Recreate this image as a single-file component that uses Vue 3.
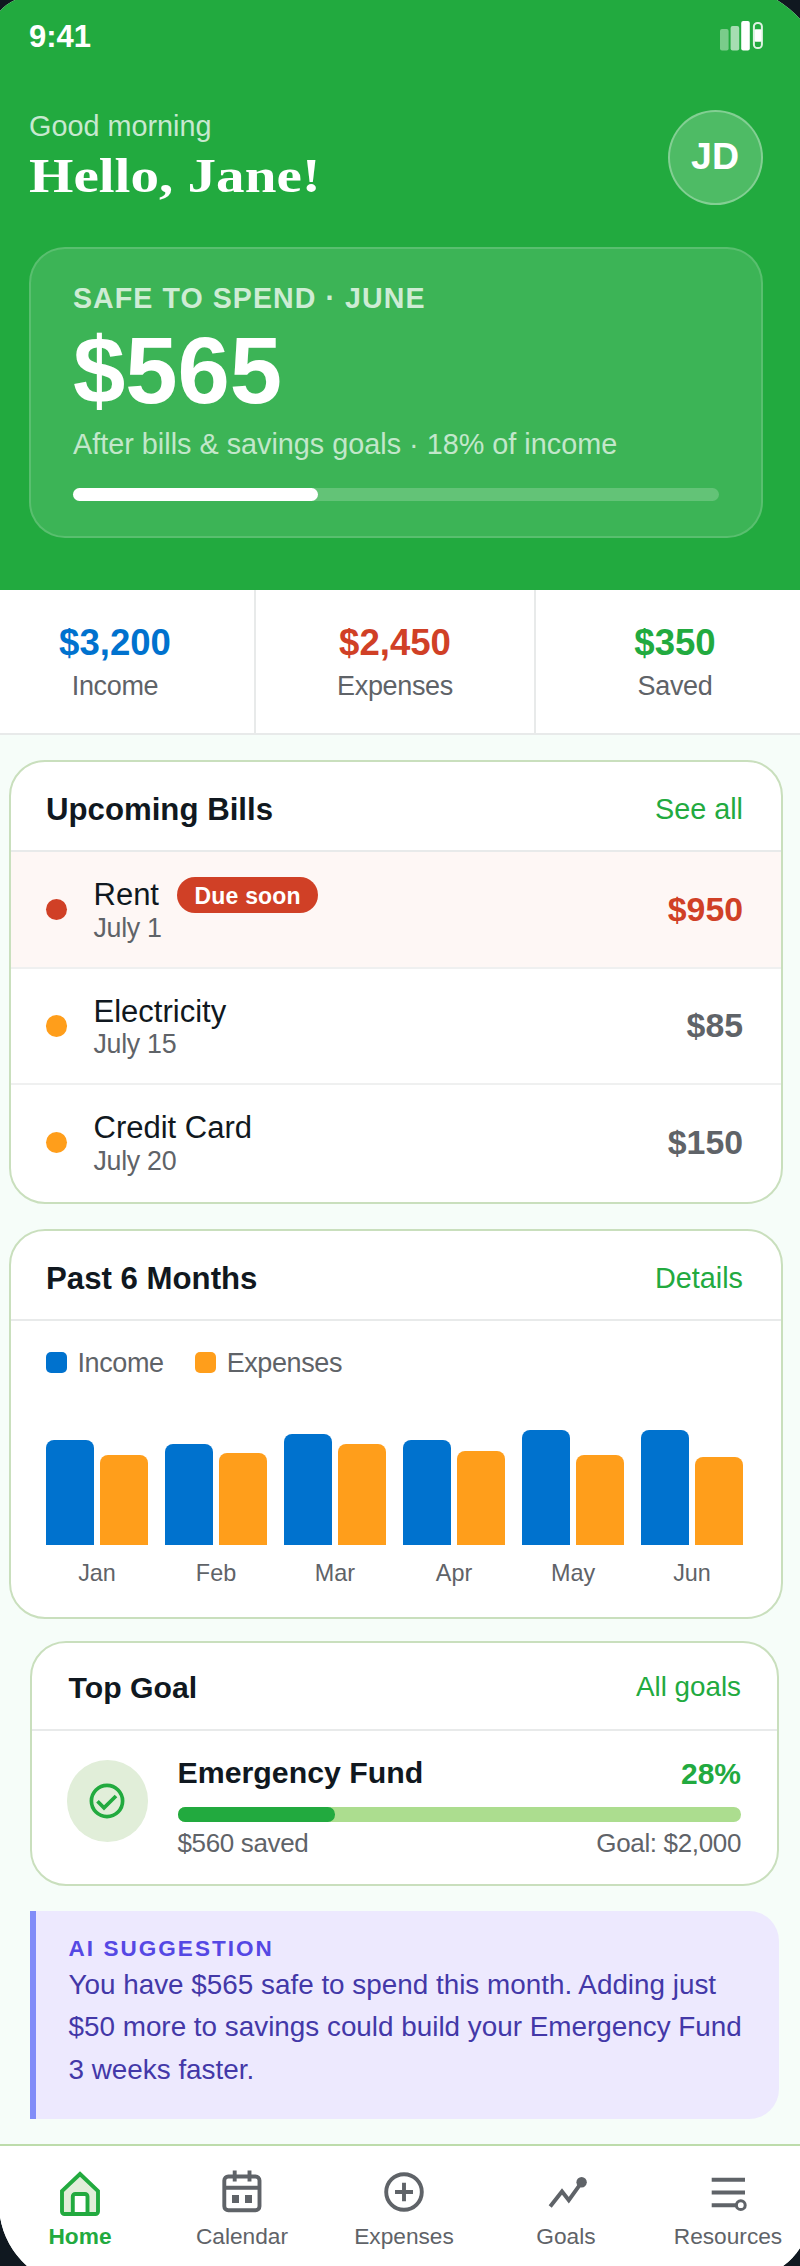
<template>
  <div class="phone">
    <!-- HEADER -->
    <header class="header">
      <div class="status-bar">
        <span class="time">9:41</span>
        <svg class="status-icons" width="43" height="30" viewBox="0 0 43 30">
          <rect x="0" y="8" width="8.6" height="21.5" rx="2" fill="#fff" opacity="0.4" />
          <rect x="10.6" y="5" width="8.6" height="24.5" rx="2" fill="#fff" opacity="0.6" />
          <rect x="21.2" y="0" width="8.6" height="29.5" rx="2" fill="#fff" />
          <rect x="33.9" y="2" width="8" height="25" rx="3.6" fill="none" stroke="#fff" stroke-width="2" opacity="0.85" />
          <rect x="34.6" y="8.2" width="6.8" height="12.6" rx="1" fill="#fff" />
        </svg>
      </div>

      <div class="greeting-row">
        <div class="greeting">
          <p class="greeting-small">Good morning</p>
          <h1 class="greeting-name">Hello, Jane!</h1>
        </div>
        <div class="avatar">JD</div>
      </div>

      <div class="safe-card">
        <p class="safe-label">SAFE TO SPEND · JUNE</p>
        <p class="safe-amount">$565</p>
        <p class="safe-sub">After bills &amp; savings goals · 18% of income</p>
        <div class="safe-track">
          <div class="safe-fill" :style="{ width: safePercent + '%' }"></div>
        </div>
      </div>
    </header>

    <!-- STATS -->
    <section class="stats">
      <div v-for="stat in stats" :key="stat.label" class="stat">
        <span class="stat-value" :class="stat.tone">{{ stat.value }}</span>
        <span class="stat-label">{{ stat.label }}</span>
      </div>
    </section>

    <main class="content">
      <!-- UPCOMING BILLS -->
      <section class="card">
        <div class="card-head">
          <h2>Upcoming Bills</h2>
          <a class="card-link">See all</a>
        </div>
        <div v-for="bill in bills" :key="bill.name" class="bill" :class="{ urgent: bill.urgent }">
          <span class="bill-dot"></span>
          <div class="bill-info">
            <div class="bill-name">
              {{ bill.name }}<span v-if="bill.urgent" class="badge">Due soon</span>
            </div>
            <div class="bill-date">{{ bill.date }}</div>
          </div>
          <span class="bill-amount">{{ bill.amount }}</span>
        </div>
      </section>

      <!-- PAST 6 MONTHS -->
      <section class="card chart-card">
        <div class="card-head">
          <h2>Past 6 Months</h2>
          <a class="card-link">Details</a>
        </div>
        <div class="legend">
          <span class="legend-item"><i class="swatch income"></i>Income</span>
          <span class="legend-item"><i class="swatch expenses"></i>Expenses</span>
        </div>
        <div class="chart">
          <div v-for="m in months" :key="m.name" class="month">
            <div class="bars">
              <div class="bar income" :style="{ height: m.income + 'px' }"></div>
              <div class="bar expenses" :style="{ height: m.expenses + 'px' }"></div>
            </div>
            <span class="month-label">{{ m.name }}</span>
          </div>
        </div>
      </section>

      <!-- TOP GOAL -->
      <section class="card goal-card">
        <div class="card-head">
          <h2>Top Goal</h2>
          <a class="card-link">All goals</a>
        </div>
        <div class="goal">
          <div class="goal-icon">
            <svg width="40" height="40" viewBox="0 0 40 40" fill="none" stroke="#22aa3f" stroke-width="3.7">
              <circle cx="20" cy="20" r="15.6" />
              <path d="M10.5 20.3 L17 26.8 L29 15" />
            </svg>
          </div>
          <div class="goal-body">
            <div class="goal-top">
              <span class="goal-name">Emergency Fund</span>
              <span class="goal-percent">{{ goalPercent }}%</span>
            </div>
            <div class="goal-track">
              <div class="goal-fill" :style="{ width: goalPercent + '%' }"></div>
            </div>
            <div class="goal-bottom">
              <span>$560 saved</span>
              <span>Goal: $2,000</span>
            </div>
          </div>
        </div>
      </section>

      <!-- AI SUGGESTION -->
      <section class="suggestion">
        <p class="suggestion-label">AI SUGGESTION</p>
        <p class="suggestion-text">
          You have $565 safe to spend this month. Adding just<br />
          $50 more to savings could build your Emergency Fund<br />
          3 weeks faster.
        </p>
      </section>
    </main>

    <!-- BOTTOM NAV -->
    <nav class="nav">
      <a class="nav-item active">
        <svg class="nav-icon" viewBox="0 0 48 48">
          <path d="M24 6 L42 23 V43.5 a2.5 2.5 0 0 1 -2.5 2.5 H8.5 a2.5 2.5 0 0 1 -2.5 -2.5 V23 Z" fill="#e1eed9" />
          <path d="M16.8 46 V28.5 a2.5 2.5 0 0 1 2.5 -2.5 H29 a2.5 2.5 0 0 1 2.5 2.5 V46 Z" fill="#fff" />
        </svg>
        <span>Home</span>
      </a>
      <a class="nav-item">
        <svg class="nav-icon" viewBox="0 0 48 48">
          <rect x="6.3" y="8.5" width="35.2" height="33.8" rx="4" />
          <path d="M6.3 19.8 H41.5 M16.7 2.5 V13.5 M31.5 2.5 V13.5" />
          <path d="M14 27 h7 v8 h-7 Z M27 27 h7 v8 h-7 Z" class="solid" />
        </svg>
        <span>Calendar</span>
      </a>
      <a class="nav-item">
        <svg class="nav-icon" viewBox="0 0 48 48">
          <circle cx="24" cy="24" r="17.8" />
          <path d="M24 14.8 V33.2 M15 24 H33" />
        </svg>
        <span>Expenses</span>
      </a>
      <a class="nav-item">
        <svg class="nav-icon" viewBox="0 0 48 48">
          <path d="M8.2 38.5 L20 23.5 L26.8 32.2 L39.6 14.4" />
          <circle cx="39.6" cy="14.2" r="5.2" class="solid" />
        </svg>
        <span>Goals</span>
      </a>
      <a class="nav-item">
        <svg class="nav-icon" viewBox="0 0 48 48">
          <path d="M7.7 11.7 H41 M7.7 24.5 H41 M7.7 37.2 H32" stroke-width="4" />
          <circle cx="36.8" cy="37.2" r="4.4" stroke-width="3" />
        </svg>
        <span>Resources</span>
      </a>
    </nav>
  </div>
</template>

<script setup>
import { ref } from 'vue';

const safePercent = ref(38);
const goalPercent = ref(28);

const stats = [
  { value: '$3,200', label: 'Income', tone: 'blue' },
  { value: '$2,450', label: 'Expenses', tone: 'red' },
  { value: '$350', label: 'Saved', tone: 'green' },
];

const bills = [
  { name: 'Rent', date: 'July 1', amount: '$950', urgent: true },
  { name: 'Electricity', date: 'July 15', amount: '$85', urgent: false },
  { name: 'Credit Card', date: 'July 20', amount: '$150', urgent: false },
];

const months = [
  { name: 'Jan', income: 105, expenses: 90 },
  { name: 'Feb', income: 101, expenses: 92.5 },
  { name: 'Mar', income: 111, expenses: 101 },
  { name: 'Apr', income: 105, expenses: 94.5 },
  { name: 'May', income: 115.5, expenses: 90 },
  { name: 'Jun', income: 115.5, expenses: 88.5 },
];
</script>

<style>
body {
  margin: 0;
  background-color: #101820;
}
</style>

<style scoped>
.phone {
  width: 800px;
  height: 2266px;
  overflow: hidden;
  box-sizing: border-box;
  display: flex;
  flex-direction: column;
  background-color: #f6fdf9;
  color: #101820;
  font-family: "Liberation Sans", Arial, sans-serif;
  clip-path: path('M15 0 H777 Q790 8 800 19 V2248 Q793 2259 783 2266 H27 Q5 2246 0 2217 V11 Q6 4 15 0 Z');
}

.phone * {
  box-sizing: border-box;
}

p,
h1,
h2 {
  margin: 0;
}

/* Header */
.header {
  height: 590px;
  flex-shrink: 0;
  padding: 0 37.5px 0 29px;
  background-color: #22aa3f;
  color: #fff;
}

.status-bar {
  height: 76px;
  display: flex;
  justify-content: space-between;
  align-items: center;
}

.time {
  margin-bottom: 2px;
  font-size: 31px;
  font-weight: bold;
}

.status-icons {
  margin-bottom: 4px;
}

.greeting-row {
  height: 96px;
  margin-top: 34px;
  display: flex;
  justify-content: space-between;
}

.greeting-small {
  font-size: 28.8px;
  line-height: 32px;
  color: rgba(255, 255, 255, 0.75);
}

.greeting-name {
  margin-top: 4px;
  font-family: "Liberation Serif", Georgia, serif;
  font-size: 49px;
  line-height: 60px;
  white-space: nowrap;
  transform: scaleX(1.165);
  transform-origin: left;
}

.avatar {
  width: 95px;
  height: 95px;
  padding-bottom: 2px;
  display: flex;
  align-items: center;
  justify-content: center;
  border: 2px solid rgba(255, 255, 255, 0.3);
  border-radius: 50%;
  background-color: rgba(255, 255, 255, 0.2);
  font-size: 37.5px;
  font-weight: bold;
}

.safe-card {
  height: 291px;
  margin-top: 41px;
  padding: 32px 42px 0;
  border: 2px solid rgba(255, 255, 255, 0.15);
  border-radius: 36px;
  background-color: rgba(255, 255, 255, 0.12);
}

.safe-label {
  font-size: 28.6px;
  font-weight: bold;
  line-height: 34px;
  letter-spacing: 1.05px;
  color: rgba(255, 255, 255, 0.75);
}

.safe-amount {
  margin-top: 11px;
  font-size: 94px;
  font-weight: bold;
  line-height: 90px;
}

.safe-sub {
  margin-top: 11px;
  font-size: 28.8px;
  line-height: 34px;
  white-space: nowrap;
  color: rgba(255, 255, 255, 0.7);
}

.safe-track {
  height: 13px;
  margin-top: 26.5px;
  border-radius: 6.5px;
  background-color: rgba(255, 255, 255, 0.2);
}

.safe-fill {
  height: 100%;
  border-radius: 6.5px;
  background-color: #fff;
}

/* Stats */
.stats {
  width: 840px;
  height: 145px;
  flex-shrink: 0;
  margin-left: -24px;
  display: grid;
  grid-template-columns: repeat(3, 280px);
  background-color: #fff;
  border-bottom: 2px solid #e8eaea;
}

.stat {
  padding-top: 31px;
  display: flex;
  flex-direction: column;
  align-items: center;
  border-right: 2px solid #e8eaea;
}

.stat-value {
  font-size: 36.6px;
  font-weight: bold;
  line-height: 44px;
}

.stat-value.blue {
  color: #0072ce;
}

.stat-value.red {
  color: #d04026;
}

.stat-value.green {
  color: #22aa3f;
}

.stat-label {
  margin-top: 4px;
  font-size: 27px;
  line-height: 34px;
  letter-spacing: -0.35px;
  color: #5f6368;
}

/* Cards */
.content {
  flex: 1;
  padding: 25px 0 0 8.5px;
}

.card {
  width: 774.5px;
  border: 2px solid #c9dfbd;
  border-radius: 36px;
  background-color: #fff;
  overflow: hidden;
}

.card-head {
  height: 90px;
  padding: 6px 38px 0 35.5px;
  display: flex;
  justify-content: space-between;
  align-items: center;
  border-bottom: 2px solid #e8eaea;
}

.card-head h2 {
  padding-top: 2px;
  font-size: 31.2px;
  font-weight: bold;
}

.card-link {
  font-size: 28.8px;
  color: #22aa3f;
}

/* Bills */
.bill {
  height: 116.5px;
  padding: 2px 38px 0 35px;
  display: flex;
  align-items: center;
  border-bottom: 2px solid #eff0f0;
}

.bill:last-child {
  height: 117px;
  padding-bottom: 2px;
  border-bottom: none;
}

.bill.urgent {
  background-color: #fef7f5;
}

.bill-dot {
  width: 21.5px;
  height: 21.5px;
  margin-bottom: 2px;
  border-radius: 50%;
  background-color: #ff9e1b;
}

.urgent .bill-dot {
  background-color: #d04026;
}

.bill-info {
  flex: 1;
  padding-top: 3px;
  margin-left: 26.5px;
}

.bill-name {
  height: 33.5px;
  display: flex;
  align-items: center;
  font-size: 31px;
}

.bill-date {
  font-size: 26.8px;
  line-height: 33.5px;
  letter-spacing: -0.3px;
  color: #5f6368;
}

.badge {
  height: 36px;
  margin-left: 18.5px;
  padding: 3px 17px 0;
  display: flex;
  align-items: center;
  border-radius: 18px;
  background-color: #d04026;
  color: #fff;
  font-size: 23px;
  font-weight: bold;
  letter-spacing: 0.2px;
}

.bill-amount {
  padding-bottom: 2px;
  font-size: 33.8px;
  font-weight: bold;
  color: #5f6368;
}

.urgent .bill-amount {
  color: #d04026;
}

/* Chart */
.chart-card {
  height: 390px;
  margin-top: 25px;
}

.legend {
  padding: 21.5px 35px 0;
  display: flex;
  gap: 31px;
}

.legend-item {
  display: flex;
  align-items: center;
  gap: 10.5px;
  font-size: 27px;
  line-height: 40px;
  letter-spacing: -0.4px;
  color: #5f6368;
}

.swatch {
  width: 21.5px;
  height: 21.5px;
  border-radius: 5px;
}

.income {
  background-color: #0072ce;
}

.expenses {
  background-color: #ff9e1b;
}

.chart {
  margin-top: 42.5px;
  padding: 0 38px 0 35.5px;
  display: grid;
  grid-template-columns: repeat(6, 1fr);
  column-gap: 17px;
}

.month {
  display: flex;
  flex-direction: column;
  align-items: center;
}

.bars {
  width: 100%;
  height: 120px;
  display: flex;
  align-items: flex-end;
  gap: 5.5px;
}

.bar {
  flex: 1;
  border-radius: 8px 8px 0 0;
}

.month-label {
  margin-top: 14px;
  font-size: 23.4px;
  line-height: 28px;
  color: #5f6368;
}

/* Goal */
.goal-card {
  width: 749px;
  height: 245px;
  margin: 22px 0 0 21.5px;
}

.goal-card .card-head {
  height: 87.5px;
  padding: 2px 36px 0 36.5px;
}

.goal-card h2 {
  font-size: 30.2px;
}

.goal-card .card-link {
  font-size: 27.8px;
}

.goal {
  padding: 25px 36px 0 34.5px;
  display: flex;
}

.goal-icon {
  width: 81.5px;
  height: 81.5px;
  margin: 4.5px 29.5px 0 0;
  display: flex;
  align-items: center;
  justify-content: center;
  border-radius: 50%;
  background-color: #e1eed9;
}

.goal-body {
  flex: 1;
}

.goal-top,
.goal-bottom {
  display: flex;
  justify-content: space-between;
  line-height: 34px;
}

.goal-name {
  font-size: 30.3px;
  font-weight: bold;
}

.goal-percent {
  padding-top: 1px;
  height: 34px;
  font-size: 30px;
  font-weight: bold;
  color: #22aa3f;
}

.goal-track {
  height: 14.5px;
  margin-top: 17.5px;
  border-radius: 7.25px;
  background-color: #acdd8f;
}

.goal-fill {
  height: 100%;
  border-radius: 7.25px;
  background-color: #22aa3f;
}

.goal-bottom {
  margin-top: 4px;
  font-size: 26px;
  letter-spacing: -0.35px;
  color: #5f6368;
}

/* AI suggestion */
.suggestion {
  width: 749px;
  height: 208.5px;
  margin: 24.5px 0 0 21.5px;
  padding: 23px 0 0 32.5px;
  border-left: 6px solid #818cf8;
  border-radius: 0 30px 30px 0;
  background-color: #ede9fe;
}

.suggestion-label {
  font-size: 22.5px;
  font-weight: bold;
  line-height: 30px;
  letter-spacing: 2.05px;
  color: #5548e4;
}

.suggestion-text {
  font-size: 27.85px;
  line-height: 42.8px;
  white-space: nowrap;
  color: #4338a8;
}

/* Bottom nav */
.nav {
  width: 810px;
  height: 122px;
  flex-shrink: 0;
  margin-left: -1px;
  padding-top: 21.5px;
  display: grid;
  grid-template-columns: repeat(5, 162px);
  border-top: 2px solid #bddcab;
  background-color: #fff;
}

.nav-item {
  display: flex;
  flex-direction: column;
  align-items: center;
  font-size: 22.7px;
  line-height: 28px;
  color: #5f6368;
}

.nav-item.active {
  color: #22aa3f;
  font-weight: bold;
}

.nav-item span {
  margin-top: 6.5px;
}

.nav-icon {
  width: 48px;
  height: 48px;
  fill: none;
  stroke: currentColor;
  stroke-width: 3.9;
}

.nav-icon .solid {
  fill: currentColor;
  stroke: none;
}
</style>
